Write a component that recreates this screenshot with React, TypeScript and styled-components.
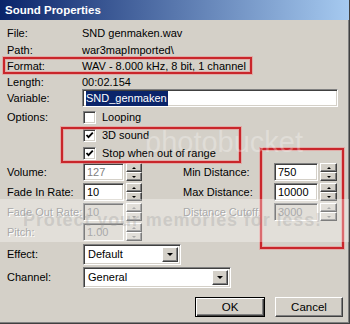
import React from "react";
import styled, { createGlobalStyle, css } from "styled-components";

const Global = createGlobalStyle`
  html, body { margin: 0; padding: 0; background: #d4d0c8; }
  body {
    font-family: "Liberation Sans", Arial, sans-serif;
    font-size: 11px;
    color: #000;
  }
  #root { width: 350px; height: 324px; }
`;

const FACE = "#d4d0c8";

const sunken = css`
  box-sizing: border-box;
  border: 1px solid;
  border-color: #808080 #ffffff #ffffff #808080;
  box-shadow: inset 1px 1px 0 #404040, inset -1px -1px 0 ${FACE};
`;

const raised = css`
  box-sizing: border-box;
  border: 1px solid;
  border-color: #ffffff #404040 #404040 #ffffff;
  box-shadow: inset -1px -1px 0 #808080;
  background: ${FACE};
`;

const Window = styled.div`
  position: relative;
  width: 350px;
  height: 324px;
  box-sizing: border-box;
  background: ${FACE};
  border-right: 1px solid #404040;
  border-bottom: 1px solid #404040;
  box-shadow: inset -1px -1px 0 #808080;
  display: flex;
  flex-direction: column;
  overflow: hidden;
`;

const TitleBar = styled.div`
  height: 20px;
  flex: none;
  background: linear-gradient(to right, #0a246a, #a6caf0);
  color: #fff;
  font-weight: bold;
  font-size: 11.5px;
  display: flex;
  align-items: center;
  padding-left: 5px;
`;

const Body = styled.div`
  display: flex;
  flex-direction: column;
  padding: 5px 0 0 7px;
`;

const InfoRow = styled.div<{ $h: number }>`
  display: grid;
  grid-template-columns: 75px 1fr;
  align-items: center;
  height: ${(p) => p.$h}px;
  white-space: nowrap;
`;

const Label = styled.span<{ $disabled?: boolean; $w?: number }>`
  white-space: nowrap;
  ${(p) => (p.$w ? `width: ${p.$w}px; flex: none;` : "")}
  ${(p) =>
    p.$disabled
      ? css`
          color: #808080;
          text-shadow: 1px 1px 0 #ffffff;
        `
      : ""}
`;

const TextBox = styled.div<{ $w: number; $h?: number; $disabled?: boolean; $gray?: boolean }>`
  ${sunken};
  width: ${(p) => p.$w}px;
  height: ${(p) => p.$h ?? 18}px;
  background: ${(p) => (p.$disabled ? FACE : "#fff")};
  color: ${(p) => (p.$disabled || p.$gray ? "#808080" : "#000")};
  display: flex;
  align-items: center;
  padding-left: 3px;
  flex: none;
`;

const Selected = styled.span`
  background: #0a246a;
  color: #fff;
  padding: 1px 1px 1px 0;
  line-height: 13px;
`;

const OptionsRow = styled.div`
  display: grid;
  grid-template-columns: 76px 1fr;
  margin-top: 1px;
`;

const OptionsLabel = styled.span`
  height: 18px;
  display: flex;
  align-items: center;
`;

const CheckList = styled.div`
  display: flex;
  flex-direction: column;
`;

const CheckRow = styled.label`
  height: 18px;
  display: flex;
  align-items: center;
  gap: 6px;
`;

const Box = styled.span`
  ${sunken};
  width: 13px;
  height: 13px;
  background: #fff;
  display: flex;
  align-items: center;
  justify-content: center;
  flex: none;
`;

const Check = ({ checked, label }: { checked?: boolean; label: string }) => (
  <CheckRow>
    <Box>
      {checked && (
        <svg width="9" height="9" viewBox="0 0 9 9">
          <path d="M1.5 4 L3.5 6.2 L7.8 1.6" fill="none" stroke="#000" strokeWidth="1.8" />
        </svg>
      )}
    </Box>
    <span>{label}</span>
  </CheckRow>
);

const SpinSection = styled.div`
  display: grid;
  grid-template-columns: 176px 1fr;
`;

const SpinColumn = styled.div`
  display: flex;
  flex-direction: column;
`;

const SpinRow = styled.div`
  height: 20px;
  display: flex;
  align-items: center;
`;

const Spinner = styled.div<{ $w: number }>`
  width: ${(p) => p.$w}px;
  height: 18px;
  margin-left: 2px;
  display: flex;
  flex-direction: column;
  flex: none;
`;

const SpinHalf = styled.div`
  ${raised};
  flex: 1;
  display: flex;
  align-items: center;
  justify-content: center;
`;

const Arrow = styled.span<{ $dir: "up" | "down"; $disabled?: boolean; $size?: number }>`
  width: 0;
  height: 0;
  border-left: ${(p) => p.$size ?? 3}px solid transparent;
  border-right: ${(p) => p.$size ?? 3}px solid transparent;
  ${(p) =>
    p.$dir === "up"
      ? `border-bottom: ${p.$size ?? 3}px solid ${p.$disabled ? "#808080" : "#000"};`
      : `border-top: ${p.$size ?? 3}px solid ${p.$disabled ? "#808080" : "#000"};`}
`;

const Spin = ({
  value,
  labelW,
  inputW,
  spinW,
  label,
  disabled,
  gray,
}: {
  value: string;
  labelW: number;
  inputW: number;
  spinW: number;
  label: string;
  disabled?: boolean;
  gray?: boolean;
}) => (
  <SpinRow>
    <Label $w={labelW} $disabled={disabled}>
      {label}
    </Label>
    <TextBox $w={inputW} $disabled={disabled} $gray={gray}>
      {value}
    </TextBox>
    <Spinner $w={spinW}>
      <SpinHalf>
        <Arrow $dir="up" $disabled={disabled} $size={2} />
      </SpinHalf>
      <SpinHalf>
        <Arrow $dir="down" $disabled={disabled} $size={2} />
      </SpinHalf>
    </Spinner>
  </SpinRow>
);

const ComboRow = styled.div<{ $h: number }>`
  height: ${(p) => p.$h}px;
  display: flex;
  align-items: center;
`;

const ComboBox = styled.div<{ $w: number; $h: number }>`
  ${sunken};
  width: ${(p) => p.$w}px;
  height: ${(p) => p.$h}px;
  background: #fff;
  display: flex;
  align-items: stretch;
  padding: 2px;
`;

const ComboText = styled.span`
  flex: 1;
  display: flex;
  align-items: center;
  padding-left: 2px;
`;

const DropButton = styled.span`
  ${raised};
  width: 16px;
  display: flex;
  align-items: center;
  justify-content: center;
`;

const Combo = ({ label, value, w, h }: { label: string; value: string; w: number; h: number }) => (
  <>
    <Label $w={76}>{label}</Label>
    <ComboBox $w={w} $h={h}>
      <ComboText>{value}</ComboText>
      <DropButton>
        <Arrow $dir="down" $size={3.5} />
      </DropButton>
    </ComboBox>
  </>
);

const ButtonRow = styled.div`
  display: flex;
  justify-content: flex-end;
  gap: 10px;
  margin-top: 9px;
  padding-right: 6px;
`;

const Button = styled.button<{ $default?: boolean; $w: number }>`
  font: inherit;
  font-size: 11.5px;
  color: #000;
  width: ${(p) => p.$w}px;
  height: 20px;
  padding: 0;
  background: ${FACE};
  box-sizing: border-box;
  ${(p) =>
    p.$default
      ? css`
          border: 1px solid #000;
          box-shadow: inset 1px 1px 0 #fff, inset -1px -1px 0 #404040, inset -2px -2px 0 #808080;
        `
      : css`
          border: 1px solid;
          border-color: #ffffff #404040 #404040 #ffffff;
          box-shadow: inset -1px -1px 0 #808080;
        `}
`;

const Annotation = styled.div<{ $x: number; $y: number; $w: number; $h: number }>`
  position: absolute;
  left: ${(p) => p.$x}px;
  top: ${(p) => p.$y}px;
  width: ${(p) => p.$w}px;
  height: ${(p) => p.$h}px;
  box-sizing: border-box;
  border: 2px solid #c9262b;
  box-shadow: 0 0 0 1px rgba(235, 140, 140, 0.55), inset 0 0 0 1px rgba(235, 140, 140, 0.55);
  pointer-events: none;
`;

const WatermarkBand = styled.div`
  position: absolute;
  left: 0;
  right: 0;
  top: 199px;
  height: 43px;
  background: rgba(255, 255, 255, 0.32);
  display: flex;
  align-items: center;
  padding-left: 23px;
  font-weight: bold;
  font-size: 18px;
  letter-spacing: 0.9px;
  color: rgba(150, 150, 150, 0.3);
  white-space: nowrap;
  pointer-events: none;
`;

const WatermarkLogo = styled.div`
  position: absolute;
  left: 145px;
  top: 126px;
  font-size: 29px;
  color: rgba(255, 255, 255, 0.28);
  pointer-events: none;
  white-space: nowrap;
`;

export default function App() {
  return (
    <>
      <Global />
      <Window>
        <TitleBar>Sound Properties</TitleBar>
        <Body>
          <InfoRow $h={16}>
            <Label>File:</Label>
            <span>SND genmaken.wav</span>
          </InfoRow>
          <InfoRow $h={17}>
            <Label>Path:</Label>
            <span>war3mapImported\</span>
          </InfoRow>
          <InfoRow $h={16}>
            <Label>Format:</Label>
            <span>WAV - 8.000 kHz, 8 bit, 1 channel</span>
          </InfoRow>
          <InfoRow $h={15}>
            <Label>Length:</Label>
            <span>00:02.154</span>
          </InfoRow>
          <InfoRow $h={18}>
            <Label>Variable:</Label>
            <TextBox $w={256}>
              <Selected>SND_genmaken</Selected>
            </TextBox>
          </InfoRow>
          <OptionsRow>
            <OptionsLabel>Options:</OptionsLabel>
            <CheckList>
              <Check label="Looping" />
              <Check checked label="3D sound" />
              <Check checked label="Stop when out of range" />
            </CheckList>
          </OptionsRow>
          <SpinSection>
            <SpinColumn>
              <Spin label="Volume:" value="127" gray labelW={76} inputW={41} spinW={16} />
              <Spin label="Fade In Rate:" value="10" labelW={76} inputW={41} spinW={16} />
              <Spin label="Fade Out Rate:" value="10" disabled labelW={76} inputW={41} spinW={16} />
              <Spin label="Pitch:" value="1.00" disabled labelW={76} inputW={41} spinW={16} />
            </SpinColumn>
            <SpinColumn>
              <Spin label="Min Distance:" value="750" labelW={91} inputW={44} spinW={17} />
              <Spin label="Max Distance:" value="10000" labelW={91} inputW={44} spinW={17} />
              <Spin label="Distance Cutoff:" value="3000" disabled labelW={91} inputW={44} spinW={17} />
            </SpinColumn>
          </SpinSection>
          <ComboRow $h={24}>
            <Combo label="Effect:" value="Default" w={98} h={21} />
          </ComboRow>
          <ComboRow $h={22}>
            <Combo label="Channel:" value="General" w={148} h={21} />
          </ComboRow>
          <ButtonRow>
            <Button $default $w={70}>OK</Button>
            <Button $w={68}>Cancel</Button>
          </ButtonRow>
        </Body>
        <Annotation $x={3} $y={57} $w={249} $h={17} />
        <Annotation $x={61} $y={127} $w={180} $h={36} />
        <Annotation $x={260} $y={148} $w={84} $h={101} />
        <WatermarkLogo>photobucket</WatermarkLogo>
        <WatermarkBand>Protect your memories for less!</WatermarkBand>
      </Window>
    </>
  );
}
